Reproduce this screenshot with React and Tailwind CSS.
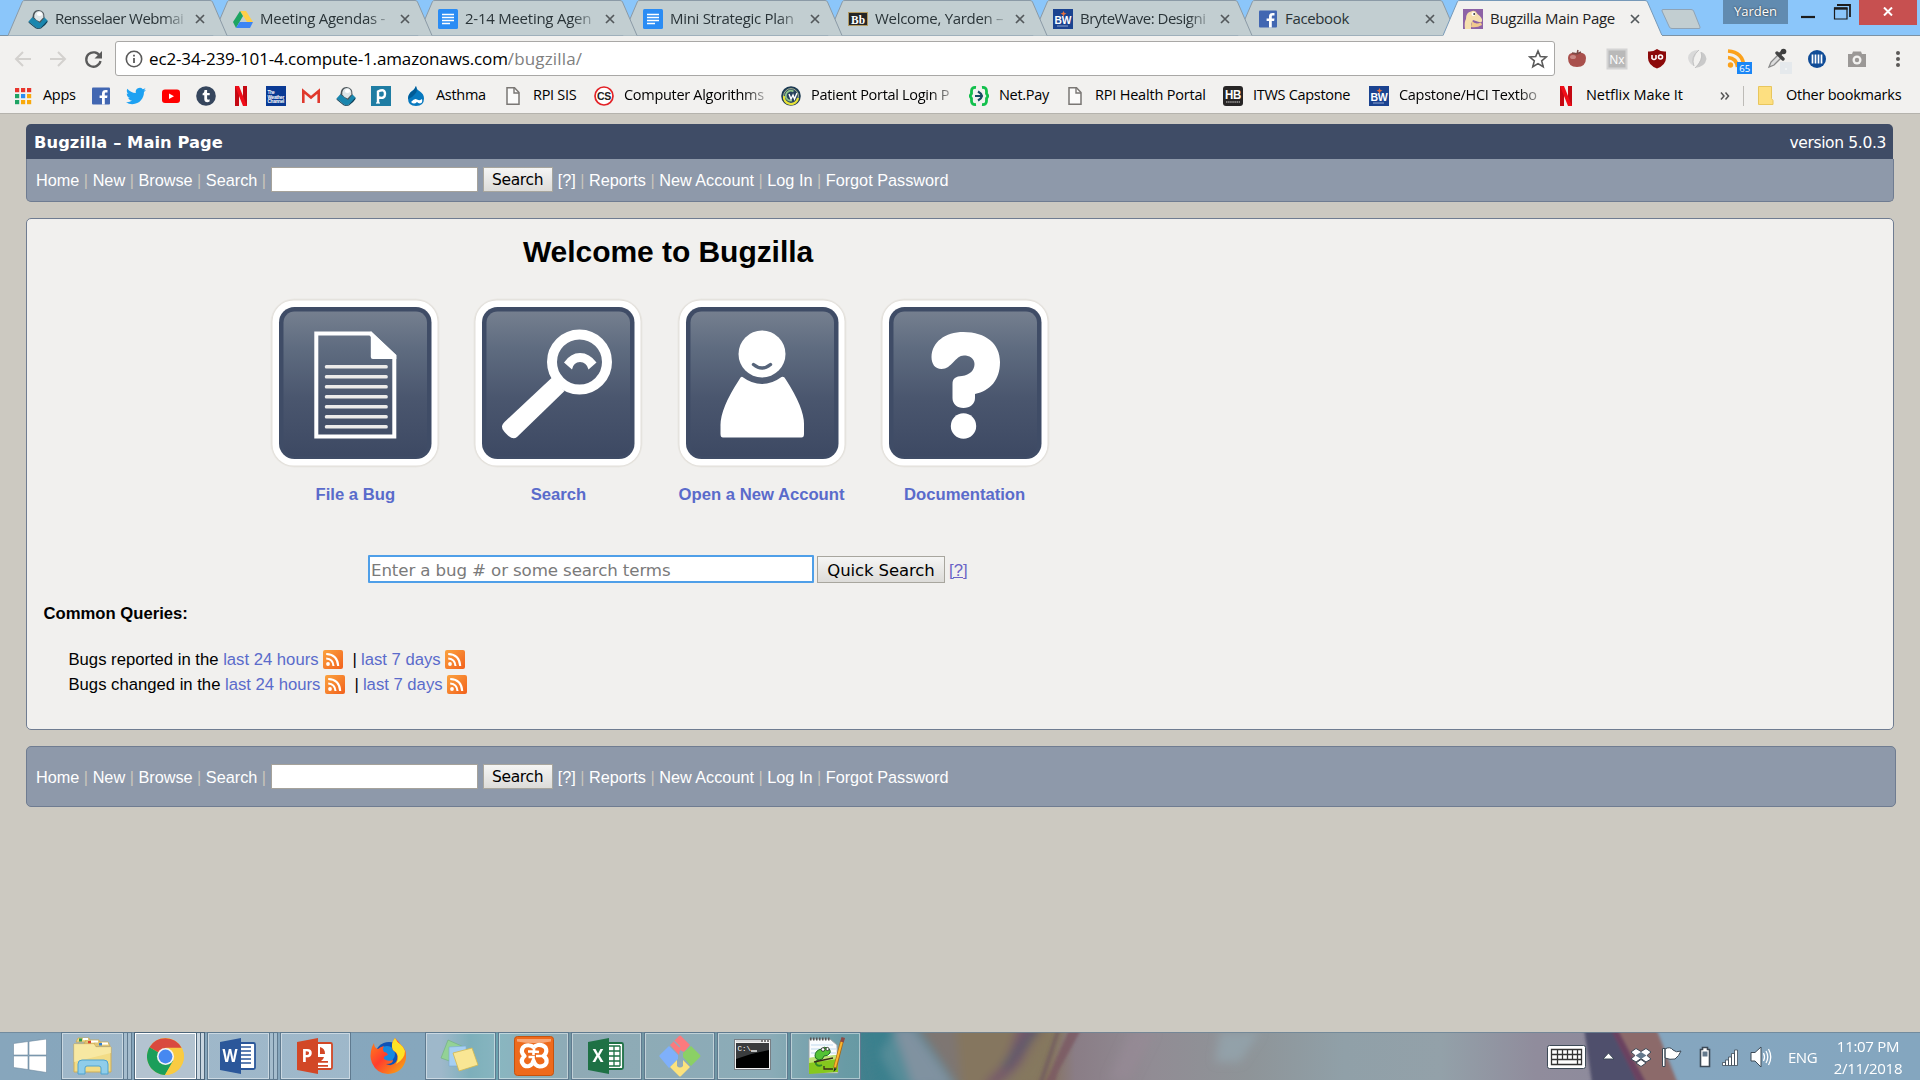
import React from "react";

const UI = "font-['Open_Sans','Noto_Sans',sans-serif]";

/* ---------- favicons and bookmark icons ---------- */
const Svg = ({ w = 20, h = 20, vb = "0 0 20 20", children, className = "" }) => (
  <svg width={w} height={h} viewBox={vb} className={"block shrink-0 " + className} preserveAspectRatio="none">{children}</svg>
);
const Webmail = () => (
  <Svg>
    <path d="M.5 12.500L5 7.500H15.500L19.500 11.500Q19 14 13 18.500Q10.500 20 8 18.500Z" fill="#1a86ae" />
    <path d="M.5 12.500L8 18.500Q10.500 20 13 18.500L19.500 11.500V13Q18 15.500 13 19.500Q10 20.500 7.500 19.300L.7 13.800Z" fill="#0c3c54" />
    <path d="M4.500 8.500Q4.500 1 10.500 1Q17 1.500 16.500 8.500L12 14Z" fill="#4b5459" />
    <path d="M6.300 8.500Q6 2 11 2Q16 2.500 15.300 8.500L11.500 12.500Q8 11.500 6.300 8.500Z" fill="#dfe6e8" />
    <ellipse cx="11.500" cy="5" rx="2.600" ry="2" fill="#fff" />
  </Svg>
);
const Drive = () => (
  <Svg>
    <path d="M7 2h6l7 11h-6z" fill="#ffcf48" /><path d="M7 2l3 5-7 12-3-6z" fill="#1da462" /><path d="M6.500 13H20l-3 6H3z" fill="#3c84f4" />
  </Svg>
);
const Docs = () => (
  <Svg><rect width="20" height="20" rx="1.500" fill="#2a8cf4" /><path d="M4 5.500h12M4 8.500h12M4 11.500h12M4 14.500h8" stroke="#fff" strokeWidth="1.400" /></Svg>
);
const Blackboard = () => (
  <Svg><rect y="3" width="20" height="14" fill="#b39a60" /><rect x="1" y="4" width="18" height="12" fill="#252525" /><text x="10" y="14.500" fontSize="12" fontWeight="700" textAnchor="middle" fill="#fff" fontFamily="Liberation Serif, serif" textLength="14" lengthAdjust="spacingAndGlyphs">Bb</text></Svg>
);
const BW = () => (
  <Svg><rect width="20" height="20" fill="#1b4390" /><text x="10" y="14.500" fontSize="11" fontWeight="700" textAnchor="middle" fill="#fff" fontFamily="Liberation Sans, sans-serif" textLength="17" lengthAdjust="spacingAndGlyphs">BW</text><path d="M10.500 2l1 2 2 .5-2 1-1 2-1-2-2-1 2-.5z" fill="#e8713c" /><path d="M4 17h11" stroke="#8fa5cf" strokeWidth="1" /></Svg>
);
const Fb = () => (
  <Svg><rect x="1" y="1.500" width="18" height="17" rx="1" fill="#4267b2" /><path d="M11 18.500v-6.500H8.600V9.400H11V7.500C11 5 12.500 4 14.600 4h1.900v2.500h-1.400c-1 0-1.300.5-1.300 1.300v1.600h2.700l-.4 2.600h-2.300v6.500z" fill="#fff" /></Svg>
);
const Dino = () => (
  <Svg><rect width="20" height="20" fill="#8d62a6" /><path d="M2 20Q1 13 3 10Q3 3 8 2.500Q12 0 14.500 5Q20 9 19 12.500Q17 14 13 12L10 11L8 15V20Z" fill="#f5dfae" /><path d="M9 12Q12 16 18 13.500L19 16Q14 19 8 18Z" fill="#f0c98d" /><circle cx="10.500" cy="5" r="2" fill="#fff" /><circle cx="11.200" cy="5" r="0.900" fill="#333" /></Svg>
);
const AppsGrid = () => (
  <Svg>
    {["#e8352c", "#e8352c", "#e8352c", "#1fa463", "#2a8cf4", "#f9a90b", "#1fa463", "#f9a90b", "#f9a90b"].map((c, i) => (
      <rect key={i} x={2 + (i % 3) * 6} y={2 + Math.floor(i / 3) * 6} width="4.200" height="4.200" fill={c} />
    ))}
  </Svg>
);
const Twitter = () => (
  <Svg vb="0 0 24 24"><path fill="#1da1f2" d="M23.950 4.570a10 10 0 0 1-2.820.77 4.960 4.960 0 0 0 2.160-2.720c-.95.55-2 .95-3.130 1.180a4.920 4.920 0 0 0-8.380 4.480C7.690 8.090 4.070 6.130 1.640 3.160a4.820 4.820 0 0 0-.67 2.480c0 1.710.87 3.210 2.190 4.100a4.900 4.900 0 0 1-2.230-.62v.06a4.920 4.920 0 0 0 3.950 4.830 5 5 0 0 1-2.210.08 4.940 4.940 0 0 0 4.600 3.420A9.870 9.870 0 0 1 0 19.540a14 14 0 0 0 7.550 2.210c9.050 0 14-7.500 14-13.980 0-.21 0-.42-.02-.63a9.940 9.940 0 0 0 2.420-2.570z" /></Svg>
);
const YouTube = () => (
  <Svg><rect x="1" y="3.500" width="18" height="13.500" rx="3" fill="#f00" /><path d="M8 7.500v5.500l5-2.750z" fill="#fff" /></Svg>
);
const Tumblr = () => (
  <Svg><circle cx="10" cy="10" r="9.800" fill="#36465d" /><path d="M8.500 4h2.600v3h2.600v2.300h-2.600v3.300c0 1.300 1.200 1.400 2.500.7v2.300c-2.600 1.200-5.300.5-5.300-2.300V9.300H6.600V7.500C8 7 8.400 5.600 8.500 4z" fill="#fff" /></Svg>
);
const Netflix = () => (
  <Svg><path d="M4 0h4v20H4z" fill="#c40812" /><path d="M12 0h4v20h-4z" fill="#c40812" /><path d="M4 0h4l8 20h-4z" fill="#f00d18" /></Svg>
);
const Weather = () => (
  <Svg><rect width="20" height="20" fill="#0a3a94" />{["The", "Weather", "Channel"].map((t, i) => (
    <text key={t} x="1.500" y={8 + i * 4.6} fontSize="5" fontWeight="700" fill="#fff" fontFamily="Liberation Sans, sans-serif" textLength={i ? 16.500 : 7} lengthAdjust="spacingAndGlyphs">{t}</text>))}</Svg>
);
const Gmail = () => (
  <Svg><rect x="1" y="4" width="18" height="13" fill="#f3f3f3" /><path d="M2.300 17V5L10 11.500 17.700 5V17" fill="none" stroke="#e0392d" strokeWidth="2.600" /></Svg>
);
const Pandora = () => (
  <Svg><rect width="20" height="20" fill="#1f7da3" /><path d="M7 17V5.500Q14 2 14 8Q14 13 8 11.500" fill="none" stroke="#fff" strokeWidth="2.400" /><path d="M5 17h4" stroke="#fff" strokeWidth="1.200" /></Svg>
);
const Drupal = () => (
  <Svg><path d="M10 0Q10 3 14 5.500Q18 8 18 12.500Q18 20 10 20Q2 20 2 12.500Q2 8 6 5Q9 3 10 0Z" fill="#0678be" /><path d="M10 0Q8 5 5 6Q2 9 2 13Q6 12 9 8Q12 5 10 0Z" fill="#005b96" /><path d="M5 16Q9 11.500 11 13.500Q14 15 16 13Q17 17 14 17.500Q12 17 11 16Q8 19 5 16Z" fill="#fff" /></Svg>
);
const Page = () => (
  <Svg><path d="M4 1.800h7.500l4.500 4.700v11.700H4z" fill="#fbfbfa" stroke="#7a7774" strokeWidth="1.500" /><path d="M11 2v5h5" fill="none" stroke="#7a7774" strokeWidth="1.400" /></Svg>
);
const CS = () => (
  <Svg><circle cx="10" cy="10" r="9" fill="#fff" stroke="#e32227" strokeWidth="1.700" /><text x="10" y="14" fontSize="11" fontWeight="700" textAnchor="middle" fill="#222" fontFamily="Liberation Sans, sans-serif" textLength="14" lengthAdjust="spacingAndGlyphs">CS</text></Svg>
);
const CW = () => (
  <Svg><circle cx="10" cy="10" r="9" fill="#27425d" stroke="#1d3b52" strokeWidth="1.600" /><circle cx="10" cy="10" r="7.400" fill="none" stroke="#c9d3a0" strokeWidth=".8" /><path d="M3 10a7 7 0 0 0 14 2" fill="none" stroke="#e8e337" strokeWidth="2.200" /><path d="M12.500 5.500A5 5 0 1 0 11 14.500" fill="none" stroke="#8fc48a" strokeWidth="1.800" /><path d="M8 8l2 5 2-4 1.500 4L16 7" fill="none" stroke="#fff" strokeWidth="1.400" /></Svg>
);
const NetPay = () => (
  <Svg><path d="M7 1.500Q2.500 1 2.500 5V7.500L1 10l1.500 2.500V15Q2.500 19 7 18.500M13 1.500Q17.500 1 17.500 5V7.500L19 10l-1.500 2.500V15Q17.500 19 13 18.500" fill="none" stroke="#12c04c" strokeWidth="2.800" /><path d="M6 10h7M9 5.500q3.500 2 4 4.500Q12.500 12.500 9 14.500" fill="none" stroke="#174a63" strokeWidth="2.200" /></Svg>
);
const HB = () => (
  <Svg><rect width="20" height="20" rx="3" fill="#272525" /><text x="10" y="13" fontSize="12" fontWeight="700" textAnchor="middle" fill="#fff" fontFamily="Liberation Sans, sans-serif" textLength="16" lengthAdjust="spacingAndGlyphs">HB</text><path d="M3 16h14" stroke="#9b9998" strokeWidth="1.300" strokeDasharray="1.500 .6" /></Svg>
);

/* ---------- tab strip ---------- */
const TABS = [
  [Webmail, "Rensselaer Webmai", "z-[17]", "tracking-[-0.55px]"],
  [Drive, "Meeting Agendas -", "z-[16]", "tracking-[-0.25px]"],
  [Docs, "2-14 Meeting Agen", "z-[15]", "tracking-[-0.25px]"],
  [Docs, "Mini Strategic Plan", "z-[14]", "tracking-[-0.3px]"],
  [Blackboard, "Welcome, Yarden –", "z-[13]", "tracking-[-0.3px]"],
  [BW, "BryteWave: Designi", "z-[12]", "tracking-[-0.5px]"],
  [Fb, "Facebook", "z-[11]", "tracking-[-0.35px]"],
  [Dino, "Bugzilla Main Page", "z-[20]", "tracking-[-0.3px]"],
];
const FADE = "[mask-image:linear-gradient(to_right,#000_82%,rgba(0,0,0,0.15))]";

const Tab = ({ Icon, title, z, active, tracking }) => (
  <div className={"relative h-9 w-[220px] -mr-[15px] shrink-0 " + z}>
    <svg width="220" height="36" className="absolute inset-0 block">
      <path d="M0 35.500 L14.500 1.500 Q15 .5 17 .5 H202 Q204 .5 204.500 2 L219 35.500" fill={active ? "#f2f1ef" : "#c2ced1"} stroke={active ? "#7799b8" : "#8b9aa6"} />
      {active && <path d="M.5 35.500H219" stroke="#f2f1ef" />}
    </svg>
    <div className="relative flex items-center h-full pt-[2px] pl-5">
      <Icon />
      <div className={"ml-[7px] -mt-[2px] w-[131px] -mr-[3px] whitespace-nowrap text-[15px] leading-5 " + (active ? "text-[#222] " : "text-[#2a3438] " + (title === "Facebook" ? "" : FADE) + " ") + tracking}>{title}</div>
      <svg width="10" height="10" viewBox="0 0 10 10" className="ml-[12px]"><path d="M1 1l8 8M9 1L1 9" stroke="#54595c" strokeWidth="1.700" /></svg>
    </div>
  </div>
);

const TabStrip = () => (
  <div className="flex h-9 bg-[#8bc6fa] border-b border-[#7c93a5] pl-2 relative">
    {TABS.map(([Icon, title, z, tr], i) => <Tab key={i} Icon={Icon} title={title} z={z} tracking={tr} active={i === 7} />)}
    <svg width="44" height="24" className="ml-[12px] mt-[8px] shrink-0"><path d="M3 1.500H31q2 0 2.600 1.500L40 19q.5 1.500-1 1.500H12q-2 0-2.600-1.500L2 3Q1.500 1.500 3 1.500z" fill="#c2ced1" stroke="#8fa3b5" /></svg>
    <div className="ml-auto flex">
      <div className="w-[65px] h-6 bg-[#618bb0] text-white text-[13px] leading-[22px] text-center [text-shadow:0_0_2px_#222]">Yarden</div>
      <svg width="71" height="25"><path d="M13 17h14" stroke="#1c1c1c" strokeWidth="2.200" /><path d="M46.500 8h12.500v11H46.500z" fill="none" stroke="#1c1c1c" strokeWidth="1.200" /><path d="M46 8.500h13.500" stroke="#1c1c1c" strokeWidth="2.400" /><path d="M49 5h13v12" fill="none" stroke="#1c1c1c" strokeWidth="1.800" /></svg>
      <div className="w-[58px] h-[25px] bg-[#c75050] flex items-center justify-center mr-[3px] pb-[2px]">
        <svg width="10" height="9"><path d="M1 .5l8 8M9 .5l-8 8" stroke="#fff" strokeWidth="2" /></svg>
      </div>
    </div>
  </div>
);

/* ---------- toolbar ---------- */
const Ext = ({ children }) => <div className="w-10 flex justify-center shrink-0"><svg width="30" height="30" viewBox="0 0 30 30">{children}</svg></div>;

const Toolbar = () => (
  <div className="h-11 flex items-center pt-px">
    <svg width="115" height="30" fill="none" className="shrink-0">
      <path d="M31 15H17M23 8l-7 7 7 7" stroke="#d3d1ce" strokeWidth="2" />
      <path d="M50 15h14M58 8l7 7-7 7" stroke="#d3d1ce" strokeWidth="2" />
      <path d="M100 12.500A7.200 7.200 0 1 0 100.500 17" stroke="#5a5a5a" strokeWidth="2.300" /><path d="M102 7v7.500h-7.500z" fill="#5a5a5a" />
    </svg>
    <div className="w-[1440px] h-[35px] border border-[#a9a8a6] rounded-[3px] bg-white flex items-center shrink-0">
      <svg width="18" height="18" viewBox="0 0 18 18" className="ml-[9px]"><circle cx="9" cy="9" r="7.700" fill="none" stroke="#5a5a5a" strokeWidth="1.600" /><path d="M9 8v5M9 4.800v1.800" stroke="#5a5a5a" strokeWidth="1.800" /></svg>
      <div className="ml-[6px] text-[17px] leading-6 tracking-[-0.13px] text-black whitespace-nowrap">ec2-34-239-101-4.compute-1.amazonaws.com<span className="text-[#808080] tracking-[0.15px]">/bugzilla/</span></div>
      <svg width="20" height="20" viewBox="0 0 20 20" className="ml-auto mr-[6px]"><path d="M10 2l2.300 5.600 6 .4-4.600 3.900 1.500 5.900L10 14.600l-5.200 3.200 1.500-5.900L1.700 8l6-.4z" fill="none" stroke="#5a5a5a" strokeWidth="1.600" /></svg>
    </div>
    <div className="flex ml-[2px]">
      <Ext><path d="M6 14Q6 8 15 9Q24 8 24 14Q24 23 15 23Q6 23 6 14z" fill="#a9504c" /><path d="M10 9l5 1 4-2M15 10l1-4" stroke="#7b4a46" strokeWidth="1.500" fill="none" /><ellipse cx="11" cy="13" rx="3" ry="2" fill="#c98884" /></Ext>
      <Ext><rect x="5.500" y="5.500" width="19" height="19" fill="#b9b9b9" stroke="#d4d4d4" strokeWidth="2" /><text x="15" y="20" fontSize="12" textAnchor="middle" fill="#fff" fontFamily="Open Sans, sans-serif">Nx</text></Ext>
      <Ext><path d="M15 5q4 3 9 2.500V14q0 7-9 10.500Q6 21 6 14V7.500Q11 8 15 5z" fill="#8c0a0a" /><path d="M10 11v3.500q2 2 4 0V11M16.500 13a2 2 0 1 0 4 0 2 2 0 1 0-4 0" stroke="#fff" strokeWidth="1.600" fill="none" /></Ext>
      <Ext><path d="M17 6Q7 6 6 14Q7 20 12 22Q10 14 17 6z" fill="#d9d9d9" /><path d="M13 24Q23 23 24.500 15Q23.500 9 19 8Q21 15 13 24z" fill="#c9c9c9" /><path d="M17 6q-9 7-5 16M13 24q9-8 6-16" stroke="#c2c2c2" fill="none" /></Ext>
      <Ext><circle cx="8.500" cy="21" r="2.700" fill="#fba11b" /><path d="M6 13.500Q14.500 14 15.500 23M6 7Q21 8 22 23" stroke="#fba11b" strokeWidth="3.600" fill="none" /><rect x="15" y="18" width="15" height="12" fill="#1a86f6" /><text x="22.700" y="27.700" fontSize="9.500" textAnchor="middle" fill="#fff" fontFamily="Open Sans, sans-serif">65</text></Ext>
      <Ext><path d="M7 23l2-5 8-8 3 3-8 8z" fill="#ddd" stroke="#8a8a8a" strokeWidth="1.300" /><path d="M15 9l6 6M17 11l4.500-4" stroke="#444" strokeWidth="3.400" strokeLinecap="round" /><circle cx="21.500" cy="7.500" r="2.800" fill="#3d3d3d" /><rect x="18" y="18" width="12" height="12" fill="#e5e9ec" /><circle cx="24" cy="25" r=".8" fill="#fff" /></Ext>
      <Ext><circle cx="15" cy="15" r="9" fill="#104c97" /><path d="M10.500 10.500v9M13.500 10.500v9M16.500 10.500v9M19.500 10.500v9" stroke="#fff" strokeWidth="1.700" /></Ext>
      <Ext><path d="M6 10h4l1-2.500h8L20 10h4v13H6z" fill="#9b9896" /><circle cx="15" cy="16" r="4.500" fill="#f2f1ef" /><circle cx="15" cy="16" r="2.200" fill="#9b9896" /></Ext>
      <Ext><g fill="#5c5957"><circle cx="16" cy="9" r="2" /><circle cx="16" cy="15" r="2" /><circle cx="16" cy="21" r="2" /></g></Ext>
    </div>
  </div>
);

const BOOKMARKS = [
  [AppsGrid, "Apps", "w-[78px]"], [Fb, "", "w-[35px]"], [Twitter, "", "w-[35px]"], [YouTube, "", "w-[35px]"], [Tumblr, "", "w-[35px]"],
  [Netflix, "", "w-[35px]"], [Weather, "", "w-[35px]"], [Gmail, "", "w-[35px]"], [Webmail, "", "w-[35px]"], [Pandora, "", "w-[35px]"],
  [Drupal, "Asthma", "w-[97px]"], [Page, "RPI SIS", "w-[91px]"], [CS, "Computer Algorithms", "w-[187px]", true],
  [CW, "Patient Portal Login P", "w-[188px]", true], [NetPay, "Net.Pay", "w-[96px]"], [Page, "RPI Health Portal", "w-[158px] tracking-[-0.2px]"],
  [HB, "ITWS Capstone", "w-[146px]"], [BW, "Capstone/HCI Textbo", "w-[187px]", true], [Netflix, "Netflix Make It", "w-[163px] tracking-[-0.05px]"],
];

const Bookmarks = () => (
  <div className="h-[33px] flex items-center pl-[13px] text-[14.5px] leading-5 tracking-[-0.3px] text-black whitespace-nowrap pb-[2px]">
    {BOOKMARKS.map(([Icon, label, w, fade], i) => (
      <div key={i} className={"flex items-center shrink-0 " + w}>
        <Icon />
        {label && <div className={"ml-[10px] -mt-[2px] " + (fade ? "w-[145px] " + FADE : "")}>{label}</div>}
      </div>
    ))}
    <svg width="11" height="10" viewBox="0 0 11 10" fill="none" className="ml-[1px]"><path d="M1 1.500l3 3.500L1 8.500M5.500 1.500l3 3.500-3 3.500" stroke="#555" strokeWidth="1.500" /></svg>
    <div className="w-px h-5 bg-[#bdbbb7] ml-[12px]" />
    <svg width="17" height="19" className="ml-[13px]"><path d="M1.500 .5h13v12l1.500 2v4H1.500z" fill="#fddf80" stroke="#e8c65d" /></svg>
    <div className="ml-[12px] -mt-[2px] tracking-[-0.25px]">Other bookmarks</div>
  </div>
);

/* ---------- Bugzilla page ---------- */
const Sep = () => <span className="text-[#c9c5bb]">&nbsp;|&nbsp;</span>;

const NavLinks = () => (
  <div className="flex items-center text-white text-[16.25px] leading-[23px] whitespace-nowrap [&>a]:pt-[2px] [&>span]:pt-[2px]">
    <a>Home</a><Sep /><a>New</a><Sep /><a>Browse</a><Sep /><a>Search</a><Sep />
    <div className="w-[207px] h-[25px] bg-white border border-[#a5a29b]" />
    <button className="ml-[5px] w-[70px] h-[25px] border border-[#a8a69e] bg-gradient-to-b from-[#f5f5f4] to-[#dddcd9] text-black font-['DejaVu_Sans',sans-serif] text-[15.5px] leading-[21px] pt-[2px] tracking-[-0.35px]">Search</button>
    <a className="ml-[5px]">[?]</a><Sep /><a>Reports</a><Sep /><a>New Account</a><Sep /><a>Log In</a><Sep /><a>Forgot Password</a>
  </div>
);

const Tile = ({ label, children }) => (
  <a className="w-[203.1px] flex flex-col items-center text-[#5a6bcb] font-bold text-[16.67px] leading-5">
    <svg width="170" height="170" viewBox="0 0 170 170" className="block overflow-visible">
      <rect x=".5" y=".5" width="169" height="169" rx="24" fill="#e9e7e3" />
      <rect x="1.500" y="1.500" width="167" height="167" rx="22.500" fill="#e2dfda" />
      <rect x="2.500" y="2.500" width="165" height="165" rx="21" fill="#fff" />
      <rect x="9" y="9" width="152.500" height="152" rx="15.500" fill="#3f4c66" />
      <rect x="13.500" y="13.500" width="143.500" height="145" rx="11" fill="url(#tile)" />
      {children}
    </svg>
    <span className="mt-[17px]">{label}</span>
  </a>
);

const Rss = ({ className }) => (
  <svg width="20" height="19" viewBox="0 0 20 19" className={"inline-block align-[-4px] " + className}>
    <rect width="20" height="19" rx="2" fill="url(#rss)" />
    <circle cx="5" cy="14" r="1.900" fill="#fff" /><path d="M3.200 8.500Q10 9 10.500 16M3.200 4Q14.500 4.500 15.200 16" fill="none" stroke="#fff" strokeWidth="2.100" />
  </svg>
);

const Query = ({ verb }) => (
  <div className="h-[25.2px] whitespace-nowrap">
    Bugs {verb} in the <a className="text-[#5a6bcb]">last 24 hours</a><Rss className="ml-[4.5px] mr-[9.5px]" />|<a className="text-[#5a6bcb] ml-[4.2px]">last 7 days</a><Rss className="ml-[4.6px]" />
  </div>
);

const Bugzilla = () => (
  <div className="flex-1 bg-[#ccc9c1] pl-[26px] pt-[10px] font-['Liberation_Sans',Arial,sans-serif] text-black">
    <div className="w-[1867px] h-[35px] bg-[#3f4c66] rounded-t-[5px] text-white font-['DejaVu_Sans',Verdana,sans-serif] flex items-center justify-between pl-[8px] pr-[7px] pt-[3px]">
      <span className="font-bold text-[16.3px] tracking-[0.07px]">Bugzilla – Main Page</span>
      <span className="pt-px text-[15.5px] tracking-[-0.35px]">version 5.0.3</span>
    </div>
    <div className="w-[1868px] h-[43px] bg-[#8e99aa] border border-t-0 border-[#6f7c91] rounded-b-[5px] pl-[9px] pt-[8px]"><NavLinks /></div>

    <div className="mt-4 w-[1868px] h-[512px] bg-[#f1f0ee] border border-[#6f7c91] rounded-[5px]">
      <h1 className="w-[1282px] text-center text-[30px] leading-9 font-bold mt-[15px] tracking-[-0.05px]">Welcome to Bugzilla</h1>
      <div className="flex ml-[226.8px] mt-[28px]">
        <Tile label="File a Bug">
          <g transform="translate(1.8 0)">
            <path d="M44.500 35.500H98.500L122.500 58V138.500H44.500Z" fill="none" stroke="#fff" strokeWidth="4" />
            <path d="M99 33L124.500 57V61H101Q99 61 99 59Z" fill="#fff" />
            {[0, 1, 2, 3, 4, 5, 6].map((i) => <rect key={i} x="53" y={67 + i * 10} width="63" height="3.500" rx="1.500" fill="#ecebea" />)}
          </g>
        </Tile>
        <Tile label="Search">
          <circle cx="106.500" cy="64" r="27.500" fill="none" stroke="#fff" strokeWidth="10" />
          <path d="M78.500 80L91.500 93L44 139Q40.500 142 35.500 138Q28.500 132 29 128Q29.500 126 31.500 124Z" fill="#fff" />
          <path d="M91 64.500Q97.500 55 107 55Q116.500 55 123.500 64.500L115.500 71.500Q113.500 64 107 64Q100.500 64 99 71.500Z" fill="#fff" />
        </Tile>
        <Tile label="Open a New Account">
          <circle cx="85" cy="56" r="23.500" fill="#fff" />
          <path d="M76.500 66.500Q85 73.500 93.500 66.500" fill="none" stroke="#56647a" strokeWidth="3.400" strokeLinecap="round" />
          <path d="M65.500 79Q75 86 85 86Q95 86 104.500 79Q107 78 108.500 81Q128 111 127 128V136Q127 139.500 124.500 139.500H46Q43.500 139.500 43.500 136V128Q43 111 62 82Q64 78 65.500 79Z" fill="#fff" />
        </Tile>
        <Tile label="Documentation">
          <path d="M83.500 34C106 34 120 46 120 64C120 82 110 93 95 96V100C95 106 90 110 83.500 110C77 110 72.500 106 72.500 100V86C72.500 80 76 78.500 82 78C90 77 94.500 72 94.500 66C94.500 60 89 57.500 84 57.500C75 57.500 72 71 61.500 71C55 71 51.500 66 51.500 59C52 44 65 34 83.500 34Z" fill="#fff" />
          <circle cx="83.500" cy="128" r="12.700" fill="#fff" />
        </Tile>
      </div>
      <div className="flex items-center ml-[341px] mt-[50px] font-['DejaVu_Sans',Verdana,sans-serif]">
        <div className="w-[446px] h-7 bg-white border-2 border-[#4f9fe8] rounded-[1px] text-[#7a7a7a] text-[16.67px] leading-[25px] pt-px pl-[1px] tracking-[-0.12px] whitespace-nowrap">Enter a bug # or some search terms</div>
        <button className="ml-[3px] w-[128px] h-[27px] border border-[#a8a69e] bg-gradient-to-b from-[#f5f5f4] to-[#dddcd9] text-[16.5px] leading-[23px] pt-[2px] tracking-[-0.1px] whitespace-nowrap">Quick Search</button>
        <a className="ml-[4px] pt-[2px] text-[16.67px] font-['Liberation_Sans',Arial,sans-serif] text-[#6a63c6] underline">[?]</a>
      </div>
      <div className="ml-[16.5px] mt-[19px] text-[16.67px] leading-6 font-bold">Common Queries:</div>
      <div className="ml-[41.5px] mt-[21px] text-[16.67px] leading-[25px]"><Query verb="reported" /><Query verb="changed" /></div>
    </div>

    <div className="mt-4 w-[1870px] h-[61px] bg-[#8e99aa] border border-[#6f7c91] rounded-[5px] pl-[9px] pt-[17px]"><NavLinks /></div>
  </div>
);

/* ---------- taskbar ---------- */
const OfficeIcon = ({ color, letter, kind }) => (
  <svg width="38" height="38" viewBox="0 0 38 38" className="mr-[2px]">
    <rect x="18" y="6" width="18" height="26" rx="1.500" fill="#fff" stroke={color} strokeWidth="1.800" />
    {kind === "w" && <path d="M21 10h11M21 14h11M21 18h11M21 22h11M21 26h11" stroke={color} strokeWidth="1.700" />}
    {kind === "p" && <g fill={color}><path d="M21 12a6.500 6.500 0 1 0 7 8h-7z" /><path d="M24 10a7 7 0 0 1 5 7h-5z" /><path d="M21 24h11v1.800H21zM21 28h11v1.800H21z" /></g>}
    {kind === "x" && <path d="M21 9v20M27 9v20M33 9v20M21 9h12M21 14h12M21 19h12M21 24h12M21 29h12" stroke={color} strokeWidth="1.300" />}
    <path d="M1 5L22 1V37L1 33Z" fill={color} />
    <text x="11" y="25" fontSize="18" fontWeight="700" textAnchor="middle" fill="#fff" fontFamily="Open Sans, sans-serif" textLength={letter === "W" ? 15 : 11} lengthAdjust="spacingAndGlyphs">{letter}</text>
  </svg>
);
const Explorer = () => (
  <svg width="40" height="40" viewBox="0 0 40 40">
    <path d="M3 6l2-4h11l2 4zM11 8l2-4h13l2 4zM20 10l2-4h13l2 4z" fill="#f0d98b" stroke="#c9a857" strokeWidth=".8" />
    <path d="M6 2.500h3v3H6z" fill="#2c9a4b" /><path d="M15 5h3v2.500h-3z" fill="#d9412b" /><path d="M26 7h3v2.500h-3z" fill="#2f80d0" /><path d="M10 3h5M18 5.500h7M29 7.500h6" stroke="#fff" strokeWidth="2" />
    <path d="M1 8h20l2 3h15v25H1z" fill="#f2dc86" stroke="#cfae58" /><path d="M1 8h20l2 3h15v6L1 26z" fill="#f9ecae" opacity=".7" />
    <path d="M5 28q0-4 4-4h22q4 0 4 4v10h-7v-6q0-2-2-2H14q-2 0-2 2v6H5z" fill="#8fcdea" stroke="#4fa3cf" />
  </svg>
);
const Chrome = () => (
  <svg width="37" height="37" viewBox="0 0 36 36">
    <circle cx="18" cy="18" r="18" fill="#f9cb42" /><path d="M18 18L2.400 9A18 18 0 0 1 33.600 9.500H18z" fill="#d9493f" /><path d="M18 18L2.400 9A18 18 0 0 0 17.500 36L26 22z" fill="#1b9e5a" /><path d="M18 9.800H33.700A18 18 0 0 1 17.500 36L25.500 22z" fill="#f9cb42" />
    <circle cx="18" cy="18" r="8.300" fill="#f4f4f4" /><circle cx="18" cy="18" r="6.700" fill="#4688f1" />
  </svg>
);
const Firefox = () => (
  <svg width="38" height="38" viewBox="0 0 38 38">
    <circle cx="20" cy="19" r="14" fill="#0e53b7" /><circle cx="18" cy="17" r="8" fill="#1689df" />
    <path d="M3 10q-3 9 0 16Q8 37 19 37Q34 36 37 22Q38 12 32 8Q30 5 26 1Q21 7 24 13Q31 18 27 25Q23 30 17 27Q24 27 24 23Q19 25 15 22Q14 19 19 18Q18 15 15 15Q13 12 15 9Q11 10 9 12Q5 11 5 6Z" fill="url(#fox)" />
    <path d="M26 1Q21 7 24 13Q32 18 27 27Q36 22 36 14Q34 9 31 7Q28 5 26 1z" fill="#ffe226" />
  </svg>
);
const Sticky = () => (
  <svg width="40" height="36" viewBox="0 0 40 36" className="mr-[4px]">
    <path d="M9 2L25 9L16 25L2 20Z" fill="#93d296" stroke="#6fae78" strokeWidth=".6" /><path d="M10 9L27 8L28 28L10 28Z" fill="#a6cff2" stroke="#7aa9d2" strokeWidth=".6" /><path d="M14 15L33 10L39 27L20 33Z" fill="#f9e694" stroke="#d3b84e" strokeWidth=".8" />
  </svg>
);
const Xampp = () => (
  <svg width="40" height="40" viewBox="0 0 40 40">
    <rect x=".5" y=".5" width="39" height="39" rx="3" fill="#ee6a1c" stroke="#c4530f" /><path d="M3 3h34v2.500q-17 3-34 0z" fill="#f7a777" />
    <path d="M20 11.500C17 8.500 11.500 8.500 9 11.500Q6 16 10.500 20Q6 24 9 28Q11 31 15 30Q19 28.500 19.500 24.500Q21 30 25.500 30.500Q31 30.500 32.500 26.500Q33.500 22.500 29.500 20Q34 16 31.500 11.500Q28.500 8.500 24 9Q21 9.500 20 11.500" fill="none" stroke="#fff" strokeWidth="4.200" strokeLinejoin="round" />
    <path d="M14 15.500h5.500v3.500M14.500 21h5v4M20 11.500v4l5 .5M22 20h7.500" fill="none" stroke="#fff" strokeWidth="2.600" />
  </svg>
);
const GitIcon = () => (
  <svg width="42" height="42" viewBox="0 0 42 42">
    <path d="M20 1q1-1 2 0l9 9-6 7-4-2-1 5-9-10z" fill="#fb7a7d" /><path d="M10 11l9 9v4l-9 9L.8 22q-1-1 0-2z" fill="#7fb0fb" /><path d="M32 11l9 9q1 1 0 2l-9 9-8-9v-4z" fill="#8bd065" /><path d="M18 25l-7 7 9 9q1 1 2 0l9-9-7-7v6q-3 3-6 0z" fill="#fce27d" /><circle cx="21" cy="29" r="3" fill="#94aab9" />
    <path d="M15 6l6 6" stroke="#94aab9" strokeWidth="1.500" />
  </svg>
);
const Cmd = () => (
  <svg width="37" height="31" viewBox="0 0 37 31" className="mb-[3px]">
    <rect x=".5" y=".5" width="36" height="30" fill="#f1f1f1" stroke="#777e84" /><path d="M2 2h25" stroke="#bfc4c8" /><path d="M27 2h8" stroke="#555" strokeWidth="1.500" strokeDasharray="2 1" />
    <rect x="2" y="4" width="33" height="25" fill="#000" /><path d="M2 4h33v7Q18 14 2 20z" fill="#3a3c3e" />
    <text x="3.500" y="12" fontSize="7.500" fill="#fff" fontFamily="Liberation Mono, monospace">C:\</text><path d="M17 12h6" stroke="#fff" strokeWidth="1.400" />
  </svg>
);
const Npp = () => (
  <svg width="40" height="40" viewBox="0 0 40 40">
    <path d="M3 3h21l7 6 1 28H3z" fill="#fafcfd" stroke="#9aa3a8" /><path d="M4 3h20" stroke="#555" strokeWidth="3" strokeDasharray="1.500 1.500" /><path d="M5 9h22M5 13h25M5 17h25" stroke="#bfd8ec" />
    <path d="M3 22L32 19V36L3 38z" fill="#86c81e" /><path d="M3 22L32 19V23L3 27z" fill="#c3e37a" />
    <path d="M9 20q0-6 7-7 2-3 5-1 4 1 3 5-2 3-6 3-1 4-5 4-4-1-4-4z" fill="#53c234" stroke="#1f6d23" strokeWidth="1" /><path d="M13 24q-4 1-3 4 2 3 6 1" fill="none" stroke="#2f8a27" strokeWidth="1.800" /><circle cx="17" cy="13.500" r="1.800" fill="#fff" stroke="#222" strokeWidth=".8" /><circle cx="21.500" cy="13" r="1.600" fill="#fff" stroke="#222" strokeWidth=".8" />
    <path d="M8 26L27 22M18 30v3h9" fill="none" stroke="#3a2d1a" strokeWidth="1.300" /><path d="M29 32L36 5" stroke="#a66b1c" strokeWidth="3.600" /><path d="M29 31L36 5" stroke="#fdb62c" strokeWidth="2" /><path d="M36 6L37.300 1.500" stroke="#8d4b45" strokeWidth="3.600" /><path d="M27.500 36l.8-4 2.600.7z" fill="#222" />
  </svg>
);

const TaskItem = ({ children, stack, active, plain, w }) => (
  <div className={"flex h-[48px] shrink-0 " + w}>
    <div className={"flex-1 flex items-center justify-center " + (plain ? "" : active ? "border border-[#4c657a] bg-[#b3c3d0]" : "border border-[#5f7a8f] bg-white/20")}>
      <div className={"w-full h-full flex items-center justify-center " + (plain ? "" : active ? "border border-white" : "border border-white/45")}>{children}</div>
    </div>
    {stack && [0, 1].map((i) => (
      <div key={i} className={"w-[4px] border-r border-y " + (active ? "border-[#4c657a] bg-[#c9d6e0]" : "border-[#5f7a8f] bg-white/25")} />
    ))}
  </div>
);

const Wallpaper = () => (
  <svg width="1920" height="48" className="absolute inset-0 block" preserveAspectRatio="none">
    <defs>
      <linearGradient id="wall" gradientUnits="userSpaceOnUse" x1="0" x2="1920" y1="0" y2="0">
        {[[0, "#87a6bc"], [0.23, "#86a7bd"], [0.245, "#5d9caa"], [0.26, "#6ca4b1"], [0.3, "#7395a3"], [0.4, "#6f98a6"], [0.44, "#44828f"], [0.46, "#3f7f8c"], [0.49, "#66838b"], [0.51, "#7f776a"], [0.545, "#86725c"], [0.56, "#8a7d86"], [0.6, "#918c94"], [0.65, "#8e9498"], [0.7, "#90a0a8"], [0.75, "#93a1a9"], [0.8, "#908c9c"], [0.83, "#8e8b9c"], [0.86, "#85a6bf"], [1, "#84a6bf"]].map(([o, c]) => <stop key={o} offset={o} stopColor={c} />)}
      </linearGradient>
      <linearGradient id="fox" x1="0" x2="1" y1="0" y2="1"><stop offset="0" stopColor="#ff8a16" /><stop offset=".45" stopColor="#ff3d2e" /><stop offset="1" stopColor="#f6b40f" /></linearGradient>
      <linearGradient id="tile" x1="0" x2="0" y1="0" y2="1"><stop offset="0" stopColor="#757f8f" /><stop offset=".25" stopColor="#5f6c80" /><stop offset=".6" stopColor="#4a566e" /><stop offset="1" stopColor="#3d4963" /></linearGradient>
      <linearGradient id="rss" x1="0" x2="1" y1="0" y2="1"><stop offset="0" stopColor="#fba33f" /><stop offset="1" stopColor="#f2611c" /></linearGradient>
      <filter id="soft"><feGaussianBlur stdDeviation="1.500" /></filter>
      <filter id="softer" x="-5%" width="110%" y="-50%" height="200%"><feGaussianBlur stdDeviation="5" /></filter>
    </defs>
    <rect width="1920" height="48" fill="url(#wall)" />
    <g filter="url(#softer)">
      <path d="M862-10h30l28 68h-40z" fill="#3b808d" /><path d="M880 22l14-22h16l14 58h-24z" fill="#5f929c" opacity=".7" />
      <path d="M893-5h20l42 60h-42z" fill="#8092a0" /><path d="M914-10h53v75z" fill="#7e7672" /><path d="M955-10h75l-30 70h-38z" fill="#85765f" />
      <path d="M1020-10h20l-20 42-24 22h-14l24-24z" fill="#75566a" /><path d="M1040-8l-36 44" stroke="#5a5a6c" strokeWidth="7" /><path d="M1050-6h14l-24 60h-30z" fill="#85785f" />
      <path d="M1130 0h24l-24 48h-22z" fill="#988a96" opacity=".6" /><path d="M1220 0h40l-20 30h-25z" fill="#94a7b0" opacity=".7" />
    </g>
    <g filter="url(#soft)">
      <path d="M1070-4h12l-24 44-4 14h-10z" fill="#7a5763" opacity=".8" /><path d="M1057-4h4l-18 56h-5z" fill="#6f5a60" opacity=".7" />
      <path d="M1584-4h34l30 56h-56z" fill="#4f4f6c" /><path d="M1614-4h42l22 56h-40z" fill="#8c6b6b" /><path d="M1610-4h7l30 56h-9z" fill="#6b4360" />
    </g>
    <path d="M0 .5H1920" stroke="#6d8496" strokeOpacity=".8" />
  </svg>
);

const Tray = () => (
  <svg width="249" height="48" viewBox="0 0 249 48" className="shrink-0">
    <g stroke="#3d4a57" strokeWidth="1">
      <rect x="7.500" y="13.500" width="38" height="23" rx="2" fill="#fff" />
      <path d="M11.500 17.500h30v15h-30zM11.500 22.500h30M11.500 27.500h30M17.500 17.500v15M22.500 17.500v10M27.500 17.500v10M32.500 17.500v10M37.500 17.500v15" fill="none" stroke="#333" strokeWidth="1.300" />
      <path d="M63 27l5.500-6 5.500 6z" fill="#fff" />
      <path d="M91 20l5-3.500 5 3 5-3 5 3.500-4 3.500 4 3.500-5 3-5-3.500-5 3.500-5-3 4-3.500zM96 31l5-3.500 5 3.500-5 3.500z" fill="#fff" /><path d="M95.500 23.500l5.500-3.500 5.500 3.500-5.500 3.500z" fill="#64798c" stroke="none" />
      <path d="M122.500 16.500h2.500v18h-2.500zM125 17q5-3 8 1 3 3 8 1-2 5-6 8-5 1-10-1z" fill="#fff" />
      <g transform="translate(-20 0)">
        <path d="M180.500 17.500h2v-2h5v2h2v17h-9z" fill="#fff" strokeWidth="1.600" /><path d="M182.500 19.500h5v5h-5z" fill="#64798c" stroke="none" />
        <path d="M202.500 30.500h3v3h-3zM205.500 28h3v5.500h-3zM208.500 25h3v8.500h-3zM211.500 21.500h3v12h-3zM214.500 18h3v15.500h-3z" fill="#fff" strokeWidth=".8" />
        <path d="M231 20.500h4l6-5.500v20l-6-6h-4z" fill="#fff" /><path d="M243.500 21q2 4 0 8M246 19q3.500 6 0 12M248.500 17q4.500 8 0 16" fill="none" stroke="#fff" strokeWidth="1.300" />
      </g>
    </g>
  </svg>
);

const Taskbar = () => (
  <div className="relative h-12 overflow-hidden">
    <Wallpaper />
    <div className="relative flex h-12">
      <div className="w-[61px] pr-[2px] flex items-center justify-center">
        <svg width="34" height="34" viewBox="0 0 34 34"><path d="M.5 4.500L15 2.500V16H.5zM16 2.400L33.500 0V16H16zM.5 17H15V30.500L.5 28.500zM16 17H33.500V33.500L16 30.800z" fill="#fff" stroke="#6e8aa0" strokeWidth=".6" /></svg>
      </div>
      <TaskItem w="w-[71px] mr-[2px]" stack><Explorer /></TaskItem>
      <TaskItem w="w-[71px] mr-[2px]" stack active><Chrome /></TaskItem>
      <TaskItem w="w-[71px] mr-[2px]" stack><OfficeIcon color="#2b579a" letter="W" kind="w" /></TaskItem>
      <TaskItem w="w-[71px]"><OfficeIcon color="#d24726" letter="P" kind="p" /></TaskItem>
      <TaskItem w="w-[73px] mr-[1px]" plain><Firefox /></TaskItem>
      <TaskItem w="w-[71px] mr-[2px]"><Sticky /></TaskItem>
      <TaskItem w="w-[71px] mr-[2px]"><Xampp /></TaskItem>
      <TaskItem w="w-[71px] mr-[2px]"><OfficeIcon color="#1e7145" letter="X" kind="x" /></TaskItem>
      <TaskItem w="w-[71px] mr-[2px]"><GitIcon /></TaskItem>
      <TaskItem w="w-[71px] mr-[2px]"><Cmd /></TaskItem>
      <TaskItem w="w-[71px]"><Npp /></TaskItem>
      <div className="ml-auto flex items-center w-[380px] text-white text-[15px] whitespace-nowrap">
        <Tray />
        <div className="tracking-[-0.5px] w-[28px] pt-[3px] -ml-px mr-px">ENG</div>
        <div className="ml-[6px] w-[90px] text-center leading-[22px] tracking-[-0.3px] pt-[2px]"><div>11:07 PM</div><div>2/11/2018</div></div>
      </div>
    </div>
  </div>
);

export default function App() {
  return (
    <div className={"w-[1920px] h-[1080px] overflow-hidden flex flex-col " + UI}>
      <TabStrip />
      <div className="h-[78px] bg-[#f2f1ef] border-b border-[#b5b3ad] shrink-0"><Toolbar /><Bookmarks /></div>
      <Bugzilla />
      <Taskbar />
    </div>
  );
}
